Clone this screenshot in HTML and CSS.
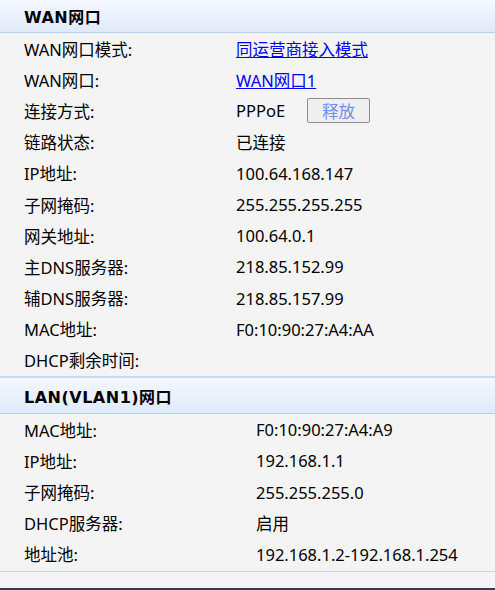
FILE: index.html
```html
<!DOCTYPE html>
<html lang="zh">
<head>
<meta charset="utf-8">
<link rel="stylesheet" href="styles.css">
</head>
<body>
<div class="page">
  <div class="sec-head first">WAN网口</div>
  <div class="rows wan">
    <div class="row"><span class="lbl">WAN网口模式:</span><a class="val link" href="#">同运营商接入模式</a></div>
    <div class="row"><span class="lbl">WAN网口:</span><a class="val link" href="#">WAN网口1</a></div>
    <div class="row"><span class="lbl">连接方式:</span><span class="val">PPPoE<button class="btn">释放</button></span></div>
    <div class="row"><span class="lbl">链路状态:</span><span class="val">已连接</span></div>
    <div class="row"><span class="lbl">IP地址:</span><span class="val">100.64.168.147</span></div>
    <div class="row"><span class="lbl">子网掩码:</span><span class="val">255.255.255.255</span></div>
    <div class="row"><span class="lbl">网关地址:</span><span class="val">100.64.0.1</span></div>
    <div class="row"><span class="lbl">主DNS服务器:</span><span class="val">218.85.152.99</span></div>
    <div class="row"><span class="lbl">辅DNS服务器:</span><span class="val">218.85.157.99</span></div>
    <div class="row"><span class="lbl">MAC地址:</span><span class="val">F0:10:90:27:A4:AA</span></div>
    <div class="row"><span class="lbl">DHCP剩余时间:</span><span class="val"></span></div>
  </div>
  <div class="sec-head">LAN(VLAN1)网口</div>
  <div class="rows lan">
    <div class="row"><span class="lbl">MAC地址:</span><span class="val">F0:10:90:27:A4:A9</span></div>
    <div class="row"><span class="lbl">IP地址:</span><span class="val">192.168.1.1</span></div>
    <div class="row"><span class="lbl">子网掩码:</span><span class="val">255.255.255.0</span></div>
    <div class="row"><span class="lbl">DHCP服务器:</span><span class="val">启用</span></div>
    <div class="row"><span class="lbl">地址池:</span><span class="val">192.168.1.2-192.168.1.254</span></div>
  </div>
  <div class="spacer"></div>
  <div class="bottom-bar"></div>
</div>
</body>
</html>
```
FILE: styles.css
```css
html, body {
  margin: 0;
  padding: 0;
  background: #f4f4f4;
}
.page {
  width: 495px;
  height: 590px;
  overflow: hidden;
  display: flex;
  flex-direction: column;
  font-family: "Noto Sans", "Noto Sans CJK SC", sans-serif;
  font-size: 16.5px;
  color: #000;
}
.sec-head {
  height: 35px;
  box-sizing: content-box;
  border-top: 2px solid #c7dcf1;
  border-bottom: 1px solid #b5cfec;
  background: linear-gradient(#f5f8fe, #dfeaf8);
  display: flex;
  align-items: center;
  padding-left: 24px;
  font-family: "DejaVu Sans", "Noto Sans CJK SC", sans-serif;
  font-weight: bold;
  font-size: 16px;
  letter-spacing: 0.5px;
}
.sec-head.first {
  height: 32px;
  border-top: none;
}
.rows {
  display: flex;
  flex-direction: column;
}
.row {
  height: 31.2px;
  display: flex;
  align-items: center;
  padding-left: 24px;
}
.lbl {
  flex: none;
}
.wan .lbl { width: 212px; }
.lan .lbl { width: 232px; }
.val {
  display: flex;
  align-items: center;
}
.link {
  color: #0000f0;
  text-decoration: underline;
}
.btn {
  margin-left: 22px;
  width: 63px;
  height: 25px;
  border: 1px solid #8e8e8e;
  border-radius: 2px;
  background: #efefef;
  color: #6f8ff0;
  font-family: "Noto Sans CJK SC", sans-serif;
  font-size: 16.5px;
  line-height: 1;
  padding: 0;
}
.lan {
  border-bottom: 1px solid #cdd6e0;
  padding-bottom: 1px;
}
.spacer {
  flex: 1;
}
.bottom-bar {
  height: 2px;
  background: #2c3d5c;
}
```
